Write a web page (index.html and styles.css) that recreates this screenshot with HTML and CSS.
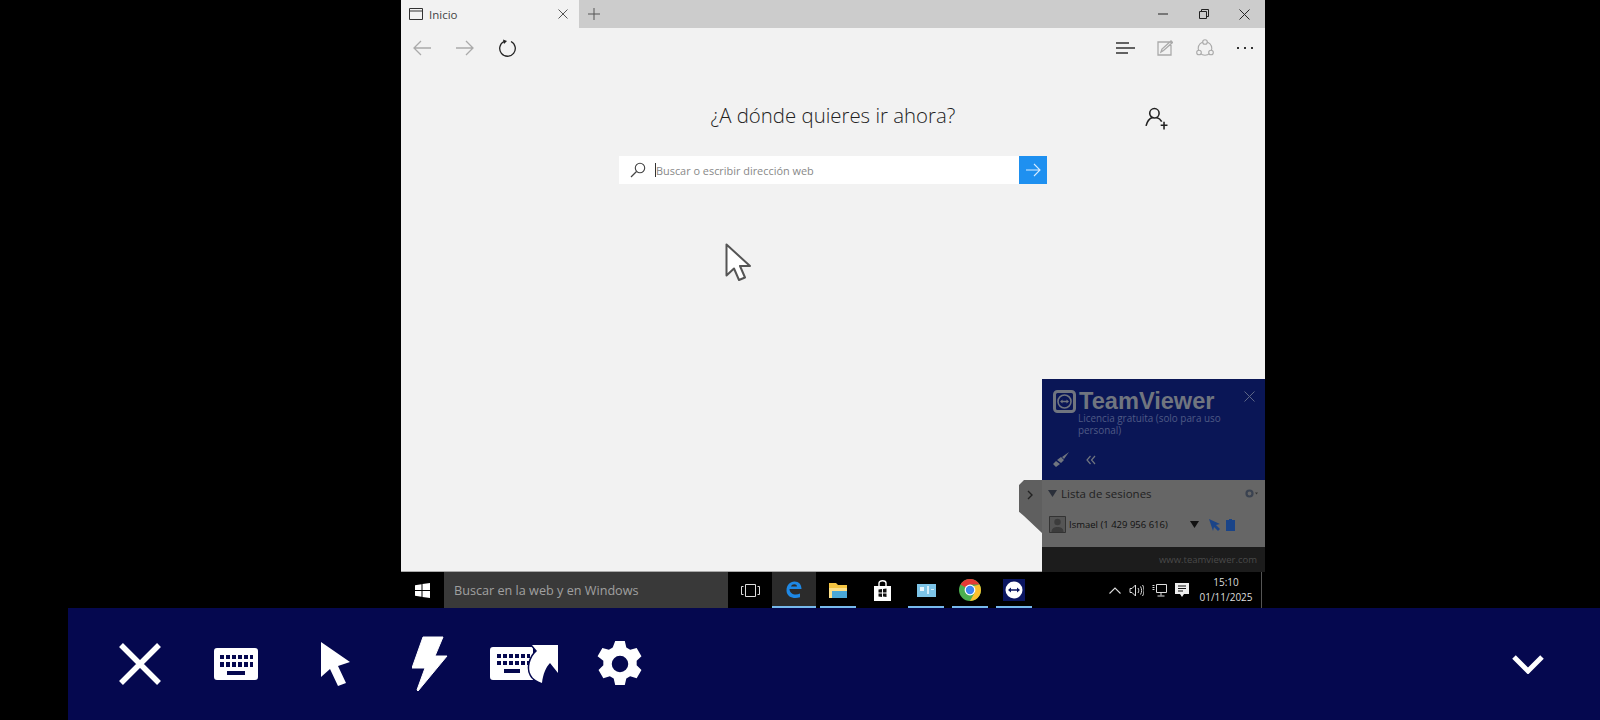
FILE: index.html
```html
<!DOCTYPE html>
<html lang="es">
<head>
    <meta charset="UTF-8">
    <title>Inicio</title>
    <link rel="stylesheet" href="styles.css">
</head>
<body>

    <div class="screen">
        <div class="browser">
            <div class="tabbar">
                <div class="tab">
                    <svg class="tab-icon" width="14" height="12" viewBox="0 0 14 12"><path d="M.5.5h13v11H.5zM.5 3h13" fill="none" stroke="#333"/></svg>
                    <span class="tab-title">Inicio</span>
                    <svg class="tab-close" width="10" height="10" viewBox="0 0 10 10"><path d="M.5.5l9 9M9.500.5l-9 9" stroke="#555"/></svg>
                </div>
                <svg class="new-tab" width="12" height="12" viewBox="0 0 12 12"><path d="M6 0v12M0 6h12" stroke="#555"/></svg>
                <div class="win-controls">
                    <div class="win-btn"><svg width="10" height="2" viewBox="0 0 10 2"><path d="M0 1h10" stroke="#222"/></svg></div>
                    <div class="win-btn"><svg width="10" height="10" viewBox="0 0 10 10"><path d="M.5 2.500h7v7h-7zM2.500 2.500v-2h7v7h-2" fill="none" stroke="#222"/></svg></div>
                    <div class="win-btn"><svg width="11" height="11" viewBox="0 0 11 11"><path d="M.5.5l10 10M10.500.5l-10 10" stroke="#222"/></svg></div>
                </div>
            </div>

            <div class="navbar">
                <div class="nav-btn"><svg width="20" height="16" viewBox="0 0 20 16"><path d="M19 8H2M9 1L2 8l7 7" fill="none" stroke="#aaa" stroke-width="1.300"/></svg></div>
                <div class="nav-btn nav-fwd"><svg width="20" height="16" viewBox="0 0 20 16"><path d="M1 8h17M11 1l7 7-7 7" fill="none" stroke="#aaa" stroke-width="1.300"/></svg></div>
                <div class="nav-btn"><svg width="20" height="20" viewBox="0 0 20 20"><path d="M6 3.500a7.800 7.800 0 1 0 7 0" fill="none" stroke="#222" stroke-width="1.300"/><path d="M5 1.500l4 1.500-3 3z" fill="#222"/></svg></div>
                <div class="nav-right">
                    <div class="nav-btn2"><svg width="19" height="12" viewBox="0 0 19 12"><path d="M0 1h13M0 6h19M0 11h12" stroke="#333" stroke-width="1.300"/></svg></div>
                    <div class="nav-btn2"><svg width="16" height="16" viewBox="0 0 16 16"><path d="M1 2h13v13H1zM4 12l1-3 9-8 1.500 1.500-9 8z" fill="none" stroke="#aaa" stroke-width="1.300"/></svg></div>
                    <div class="nav-btn2"><svg width="18" height="18" viewBox="0 0 18 18"><g stroke="#aaa" stroke-width="1.100"><circle cx="9" cy="9.500" r="6.800" fill="none"/><circle cx="9" cy="3" r="2.300" fill="#f2f2f2"/><circle cx="3" cy="13.500" r="2.300" fill="#f2f2f2"/><circle cx="15" cy="13.500" r="2.300" fill="#f2f2f2"/></g></svg></div>
                    <div class="nav-btn2"><svg width="16" height="3" viewBox="0 0 16 3"><path d="M0 0h2v2H0zM7 0h2v2H7zM14 0h2v2h-2z" fill="#333"/></svg></div>
                </div>
            </div>

            <div class="content">
                <div class="heading-row">
                    <div></div>
                    <h1>¿A dónde quieres ir ahora?</h1>
                    <svg class="add-person" width="23" height="23" viewBox="0 0 22 22"><g fill="none" stroke="#222" stroke-width="1.500"><circle cx="9" cy="6" r="4.500"/><path d="M1 18c1-4 3-7 6-8M11 10c2 .5 4 2 5 4"/><path d="M15 17.500h6.500M18.200 14v7.500"/></g></svg>
                </div>
                <div class="searchbox">
                    <svg class="search-icon" width="16" height="16" viewBox="0 0 16 16"><circle cx="10" cy="6" r="4.700" fill="none" stroke="#444" stroke-width="1.100"/><path d="M6.500 9.500L1 15" stroke="#444" stroke-width="1.200"/></svg>
                    <span class="caret"></span>
                    <span class="placeholder">Buscar o escribir dirección web</span>
                    <div class="go-btn"><svg width="16" height="14" viewBox="0 0 16 14"><path d="M1 7h14M9 1l6 6-6 6" fill="none" stroke="#d8ecff" stroke-width="1.100"/></svg></div>
                </div>
                <svg class="pointer" width="26" height="40" viewBox="0 0 26 40"><path d="M1.500 1.500v31l7.500-7 5 11.500 6-2.500-5-11.500h10z" fill="#fff" stroke="#555" stroke-width="2" stroke-linejoin="round"/></svg>
            </div>
        </div>

        <div class="taskbar">
            <div class="start"><svg width="15" height="15" viewBox="0 0 15 15"><path d="M0 2.200L6.500 1.200v5.900H0zM7.500 1L15 0v7.100H7.500zM0 8h6.500v5.800L0 12.800zM7.500 8H15v7l-7.500-1z" fill="#fff"/></svg></div>
            <div class="task-search">Buscar en la web y en Windows</div>
            <div class="task-view"><svg width="19" height="13" viewBox="0 0 19 13"><path d="M4.500.5h10v12h-10zM2.500 2.500h-2v8h2M16.500 2.500h2v8h-2" fill="none" stroke="#ddd"/></svg></div>

            <div class="task-app active"><svg width="18" height="19" viewBox="0 0 18 19"><path d="M1.500 10.500C1.500 5 5 1.500 9.500 1.500c4.500 0 7 3 7 7.500H4.500c0 5 6 7 10.500 4.500v3.800C9 19.500 1.500 17 1.500 10.500zM6 6.500h6c0-3-5-3.200-6 0z" fill="#1e88e5" fill-rule="evenodd"/></svg></div>
            <div class="task-app open"><svg width="18" height="16" viewBox="0 0 18 16"><path d="M0 1h7l2 2h9v4H0z" fill="#f5c542"/><path d="M0 6h18v10H0z" fill="#fde08a"/><path d="M3 9h15v7H3z" fill="#4aa8d8"/></svg></div>
            <div class="task-app"><svg width="19" height="21" viewBox="0 0 19 21"><path d="M1 6h17v15H1z" fill="#fff"/><path d="M6 6V3c0-3 7-3 7 0v3" fill="none" stroke="#fff" stroke-width="1.400"/><path d="M5.500 9.500l3.500-.5v3.500H5.500zM10 8.900l3.500-.5v4.100H10zM5.500 13.500H9V17l-3.500-.5zM10 13.500h3.500v3.500l-3.500-.5z" fill="#111"/></svg></div>
            <div class="task-app open"><svg width="19" height="15" viewBox="0 0 19 15"><path d="M0 1h19v13H0z" fill="#7cc4e8"/><path d="M3 4h4v4H3z" fill="#e8f6fd"/><path d="M10 3h2v8h-2zM14 6h3v1h-3z" fill="#d5eefb"/></svg></div>
            <div class="task-app open"><svg width="22" height="22" viewBox="0 0 22 22"><circle cx="11" cy="11" r="11" fill="#4caf50"/><path d="M11 11L1.500 5.500A11 11 0 0 1 20.500 5.500H11z" fill="#e53935"/><path d="M20.500 5.500A11 11 0 0 1 11 22l5-9-1-6z" fill="#fbc02d"/><circle cx="11" cy="11" r="5.400" fill="#fff"/><circle cx="11" cy="11" r="4.200" fill="#3d84f0"/></svg></div>
            <div class="task-app open"><svg width="22" height="22" viewBox="0 0 22 22"><path d="M0 0h22v22H0z" fill="#0a1560"/><circle cx="11" cy="11" r="8.500" fill="#fff"/><path d="M5 11l3-2.500v1.700h6V8.500l3 2.500-3 2.500v-1.700H8v1.700z" fill="#0a1560"/></svg></div>

            <div class="tray">
                <svg width="12" height="7" viewBox="0 0 12 7"><path d="M.5 6.500L6 1l5.500 5.500" fill="none" stroke="#ddd" stroke-width="1.100"/></svg>
                <svg width="15" height="13" viewBox="0 0 15 13"><path d="M1 4.500h2L6.500 1v11L3 8.500H1zM9 4c1 1.500 1 3.500 0 5M11.500 2.500c1.500 2.500 1.500 5.500 0 8M13.500 1c2 3 2 8 0 11" fill="none" stroke="#ddd"/></svg>
                <svg width="15" height="13" viewBox="0 0 15 13"><path d="M.5 1.500h2M4.500.5h10v8h-10zM.5 3.500h2M.5 5.500h2M9 9v2.500M5.500 12h7" fill="none" stroke="#ddd"/></svg>
                <svg width="14" height="14" viewBox="0 0 14 14"><path d="M0 0h14v11H9l-2 3-2-3H0z" fill="#eee"/><path d="M3 3h8M3 5.500h8M3 8h5" stroke="#111"/></svg>
                <div class="clock"><div>15:10</div><div>01/11/2025</div></div>
            </div>
            <div class="show-desktop"></div>
        </div>

        <div class="tv-panel">
            <div class="tv-handle">
                <svg width="7" height="10" viewBox="0 0 7 10"><path d="M1 1l4 4-4 4" fill="none" stroke="#222" stroke-width="1.400"/></svg>
            </div>
            <div class="tv-head">
                <div class="tv-brand">
                    <svg width="23" height="23" viewBox="0 0 23 23"><rect x="1.500" y="1.500" width="20" height="20" rx="3" fill="none" stroke="#70757f" stroke-width="3"/><circle cx="11.500" cy="11.500" r="6.500" fill="none" stroke="#70757f" stroke-width="1.600"/><path d="M7 11.500l2.500-2v1.300h4V9.500l2.500 2-2.500 2v-1.300h-4v1.300z" fill="#70757f"/></svg>
                    <span class="tv-name">TeamViewer</span>
                    <svg class="tv-close" width="11" height="11" viewBox="0 0 11 11"><path d="M.5.5l10 10M10.500.5l-10 10" stroke="#5d6685"/></svg>
                </div>
                <p class="tv-license">Licencia gratuita (solo para uso personal)</p>
                <div class="tv-tools">
                    <svg width="16" height="15" viewBox="0 0 16 15"><path d="M16 0L9 5l2 2zM8 5L4 8l4 3 3-3zM3 9l-3 3 3 3 4-3z" fill="#70757f"/></svg>
                    <svg width="10" height="10" viewBox="0 0 10 10"><path d="M4.500 1L1 5l3.500 4M9 1L5.500 5 9 9" fill="none" stroke="#70757f" stroke-width="1.200"/></svg>
                </div>
            </div>
            <div class="tv-list">
                <div class="tv-list-title">
                    <svg width="9" height="7" viewBox="0 0 9 7"><path d="M0 0h9L4.500 7z" fill="#2a2f3a"/></svg>
                    <span>Lista de sesiones</span>
                    <svg class="tv-gear" width="13" height="9" viewBox="0 0 13 9"><circle cx="4.500" cy="4.500" r="3" fill="none" stroke="#3a4250" stroke-width="2.200"/><path d="M10 3.500h3L11.500 5.500z" fill="#333"/></svg>
                </div>
                <div class="tv-session">
                    <svg width="17" height="17" viewBox="0 0 17 17"><path d="M.5.500h16v16H.5z" fill="#555" stroke="#333"/><circle cx="8.500" cy="6" r="3.200" fill="#3c3c3c"/><path d="M2.500 16c0-4 3-5 6-5s6 1 6 5z" fill="#3c3c3c"/></svg>
                    <span class="tv-person">Ismael (1 429 956 616)</span>
                    <svg class="tv-drop" width="9" height="7" viewBox="0 0 9 7"><path d="M0 0h9L4.500 7z" fill="#111"/></svg>
                    <svg width="12" height="12" viewBox="0 0 12 12"><path d="M0 0l11 5-4 1 4 4-2 2-4-4-1 4z" fill="#1a4488"/></svg>
                    <svg width="9" height="12" viewBox="0 0 9 12"><path d="M0 1h9v11H0z" fill="#1a4488"/><path d="M3 0h3v2H3z" fill="#1a4488"/></svg>
                </div>
            </div>
            <div class="tv-foot">www.teamviewer.com</div>
        </div>
    </div>

    <div class="toolbar">
        <div class="tool"><svg width="44" height="44" viewBox="0 0 44 44"><path d="M3 3l38 38M41 3L3 41" stroke="#fff" stroke-width="5.500"/></svg></div>
        <div class="tool"><svg width="44" height="32" viewBox="0 0 44 32"><path fill="#fff" fill-rule="evenodd" d="M3 0h38a3 3 0 0 1 3 3v26a3 3 0 0 1-3 3H3a3 3 0 0 1-3-3V3a3 3 0 0 1 3-3zM6 7v4h4V7zM12 7v4h4V7zM18 7v4h4V7zM24 7v4h4V7zM30 7v4h4V7zM36 7v4h3V7zM6 14v5h4v-5zM12 14v5h4v-5zM18 14v5h4v-5zM24 14v5h4v-5zM30 14v5h4v-5zM36 14v5h3v-5zM13 23v4h18v-4z"/></svg></div>
        <div class="tool"><svg class="cursor-icon" width="30" height="44" viewBox="0 0 30 44"><path d="M0 0l29 20-12 4 8 17-8 3-8-17-9 8z" fill="#fff"/></svg></div>
        <div class="tool"><svg class="bolt-icon" width="36" height="56" viewBox="0 0 36 56"><path d="M11 1h20L23 20h12L6 55l-1-1 8-22H0z" fill="#fff" stroke="#fff" stroke-linejoin="round"/></svg></div>
        <div class="tool"><svg width="68" height="42" viewBox="0 0 68 42"><path fill="#fff" fill-rule="evenodd" d="M3 4h40v33H3a3 3 0 0 1-3-3V7a3 3 0 0 1 3-3zM7 11v4h4v-4zM13 11v4h4v-4zM19 11v4h4v-4zM25 11v4h4v-4zM31 11v4h4v-4zM37 11v4h3v-4zM7 18v4h4v-4zM13 18v4h4v-4zM19 18v4h4v-4zM25 18v4h4v-4zM31 18v4h4v-4zM37 18v4h3v-4zM14 26v4h16v-4z"/><path d="M42 2h26v28l-8-10c-4 4-7 11-8 20-5-2-9-4-11-8-4-7-1-18 6-24z" fill="#fff" stroke="#05084f" stroke-width="3" paint-order="stroke"/></svg></div>
        <div class="tool"><svg width="46" height="46" viewBox="0 0 24 24"><path fill="#fff" fill-rule="evenodd" d="M9.500 0h5l.8 3.400 2 1.200 3.400-1 2.500 4.300-2.500 2.400v2.400l2.500 2.400-2.500 4.300-3.400-1-2 1.200-.8 3.400h-5l-.8-3.400-2-1.200-3.400 1-2.500-4.300 2.500-2.400v-2.400L.3 7.900l2.500-4.300 3.400 1 2-1.200zM12 7.700a4.300 4.300 0 1 0 0 8.600 4.300 4.300 0 0 0 0-8.600z"/></svg></div>
        <div class="tool tool-last"><svg width="32" height="19" viewBox="0 0 32 19"><path d="M2 2l14 14L30 2" fill="none" stroke="#fff" stroke-width="5"/></svg></div>
    </div>

</body>
</html>
```

FILE: styles.css
```css
* {
    box-sizing: border-box;
}
html, body {
    height: 100%;
}
body {
    margin: 0;
    background-color: #000;
    font-family: "Open Sans", "Noto Sans", sans-serif;
    overflow: hidden;
}
svg {
    display: block;
    flex: none;
}

.screen {
    position: relative;
    width: 864px;
    height: 608px;
    margin-left: 401px;
    display: flex;
    flex-direction: column;
}
.browser {
    flex: 1;
    display: flex;
    flex-direction: column;
    background-color: #f2f2f2;
    border-bottom: 1px solid #aaa;
}

/* barra pestañas */
.tabbar {
    height: 28px;
    display: flex;
    align-items: center;
    background-color: #ccc;
}
.tab {
    width: 178px;
    height: 100%;
    display: flex;
    align-items: center;
    padding: 0 11px 0 8px;
    background-color: #f2f2f2;
}
.tab-title {
    margin-left: 6px;
    font-size: 11.5px;
    color: #444;
}
.tab-close {
    margin-left: auto;
}
.new-tab {
    margin-left: 9px;
}
.win-controls {
    margin-left: auto;
    display: flex;
}
.win-btn {
    width: 41px;
    height: 28px;
    display: flex;
    align-items: center;
    justify-content: center;
}

.navbar {
    height: 40px;
    display: flex;
    align-items: center;
}
.nav-btn {
    width: 43px;
    display: flex;
    justify-content: center;
    padding-right: 1px;
}
.nav-fwd {
    padding-right: 2px;
}
.nav-right {
    margin-left: auto;
    display: flex;
}
.nav-btn2 {
    width: 40px;
    height: 20px;
    display: flex;
    align-items: center;
    justify-content: center;
}

.content {
    position: relative;
    flex: 1;
    display: flex;
    flex-direction: column;
    align-items: center;
}
.heading-row {
    width: 100%;
    margin-top: 31px;
    display: grid;
    grid-template-columns: 1fr auto 1fr;
}
.heading-row h1 {
    margin: 0;
    font-size: 20.400px;
    font-weight: 300;
    line-height: 32px;
    color: #222;
}
.add-person {
    margin: 8px 0 0 190px;
}
.searchbox {
    width: 428px;
    height: 28px;
    margin-top: 25px;
    display: flex;
    align-items: center;
    background-color: #fff;
    padding-left: 11px;
}
.caret {
    width: 1px;
    height: 14px;
    margin-left: 9px;
    background-color: #333;
}
.placeholder {
    font-size: 10.9px;
    color: #888;
}
.go-btn {
    width: 28px;
    height: 28px;
    margin-left: auto;
    display: flex;
    align-items: center;
    justify-content: center;
    background-color: #1e90f0;
}
.pointer {
    position: absolute;
    left: 324px;
    top: 175px;
}

/* barra de tareas */
.taskbar {
    height: 36px;
    display: flex;
    align-items: center;
    background-color: #000;
}
.start {
    width: 43px;
    display: flex;
    justify-content: center;
}
.task-search {
    width: 284px;
    height: 36px;
    padding-left: 10px;
    display: flex;
    align-items: center;
    background-color: #393939;
    font-size: 12.650px;
    color: #a0a0a0;
}
.task-view {
    width: 44px;
    display: flex;
    justify-content: center;
}
.task-app {
    position: relative;
    width: 44px;
    height: 36px;
    display: flex;
    align-items: center;
    justify-content: center;
}
.task-app.active {
    background-color: #2b2b2b;
    border-bottom: 2px solid #76b9ed;
}
.task-app.open::after {
    content: "";
    position: absolute;
    left: 4px;
    right: 4px;
    bottom: 0;
    height: 2px;
    background-color: #76b9ed;
}
.tray {
    margin-left: auto;
    display: flex;
    align-items: center;
    gap: 8px;
    color: #ddd;
}
.clock {
    width: 58px;
    margin-right: 6px;
    font-size: 10px;
    line-height: 15px;
    text-align: center;
    color: #ddd;
}
.show-desktop {
    width: 4px;
    height: 36px;
    border-left: 1px solid #555;
}

/* pannello teamviewer */
.tv-panel {
    position: absolute;
    right: 0;
    top: 379px;
    width: 223px;
    height: 193px;
    display: flex;
    flex-direction: column;
}
.tv-handle {
    position: absolute;
    left: -23px;
    top: 101px;
    width: 23px;
    height: 53px;
    padding: 10px 0 0 8px;
    background-color: #5f5f5f;
    clip-path: polygon(5px 0, 100% 0, 100% 100%, 5px 68%, 0 60%, 0 5px);
}
.tv-head {
    height: 101px;
    padding: 11px 10px 0 11px;
    background-color: #0a1656;
}
.tv-brand {
    display: flex;
    align-items: center;
}
.tv-name {
    margin-left: 3px;
    font-family: "Liberation Sans", sans-serif;
    font-size: 23.600px;
    line-height: 23px;
    font-weight: 700;
    color: #70757f;
}
.tv-close {
    margin: -10px 0 0 auto;
}
.tv-license {
    margin: -1px 20px 0 25px;
    font-size: 9.900px;
    line-height: 12px;
    color: #4f5a85;
}
.tv-tools {
    margin-top: 16px;
    display: flex;
    align-items: center;
    gap: 17px;
}
.tv-list {
    flex: 1;
    padding: 4px 4px 0 6px;
    background-color: #666;
}
.tv-list-title {
    display: flex;
    align-items: center;
    height: 18px;
    font-size: 11.500px;
    color: #222;
}
.tv-list-title span {
    margin-left: 4px;
}
.tv-gear {
    margin: 0 3px 0 auto;
}
.tv-session {
    margin-top: 14px;
    padding-left: 1px;
    display: flex;
    align-items: center;
    font-size: 9.500px;
    color: #111;
}
.tv-person {
    width: 121px;
    margin-left: 3px;
}
.tv-drop {
    margin-right: 10px;
}
.tv-session svg:last-child {
    margin-left: 5px;
}
.tv-foot {
    height: 25px;
    padding-right: 8px;
    display: flex;
    align-items: center;
    justify-content: flex-end;
    background-color: #1c1c1c;
    font-size: 9.500px;
    color: #4a4a4a;
}

/* barra strumenti */
.toolbar {
    height: 112px;
    margin-left: 68px;
    padding-left: 24px;
    display: flex;
    align-items: center;
    background-color: #05084f;
}
.tool {
    width: 96px;
    display: flex;
    justify-content: center;
}
.cursor-icon {
    margin-left: 7px;
}
.bolt-icon {
    margin-left: 4px;
}
.tool-last {
    width: 32px;
    margin-left: auto;
    margin-right: 56px;
}
```
